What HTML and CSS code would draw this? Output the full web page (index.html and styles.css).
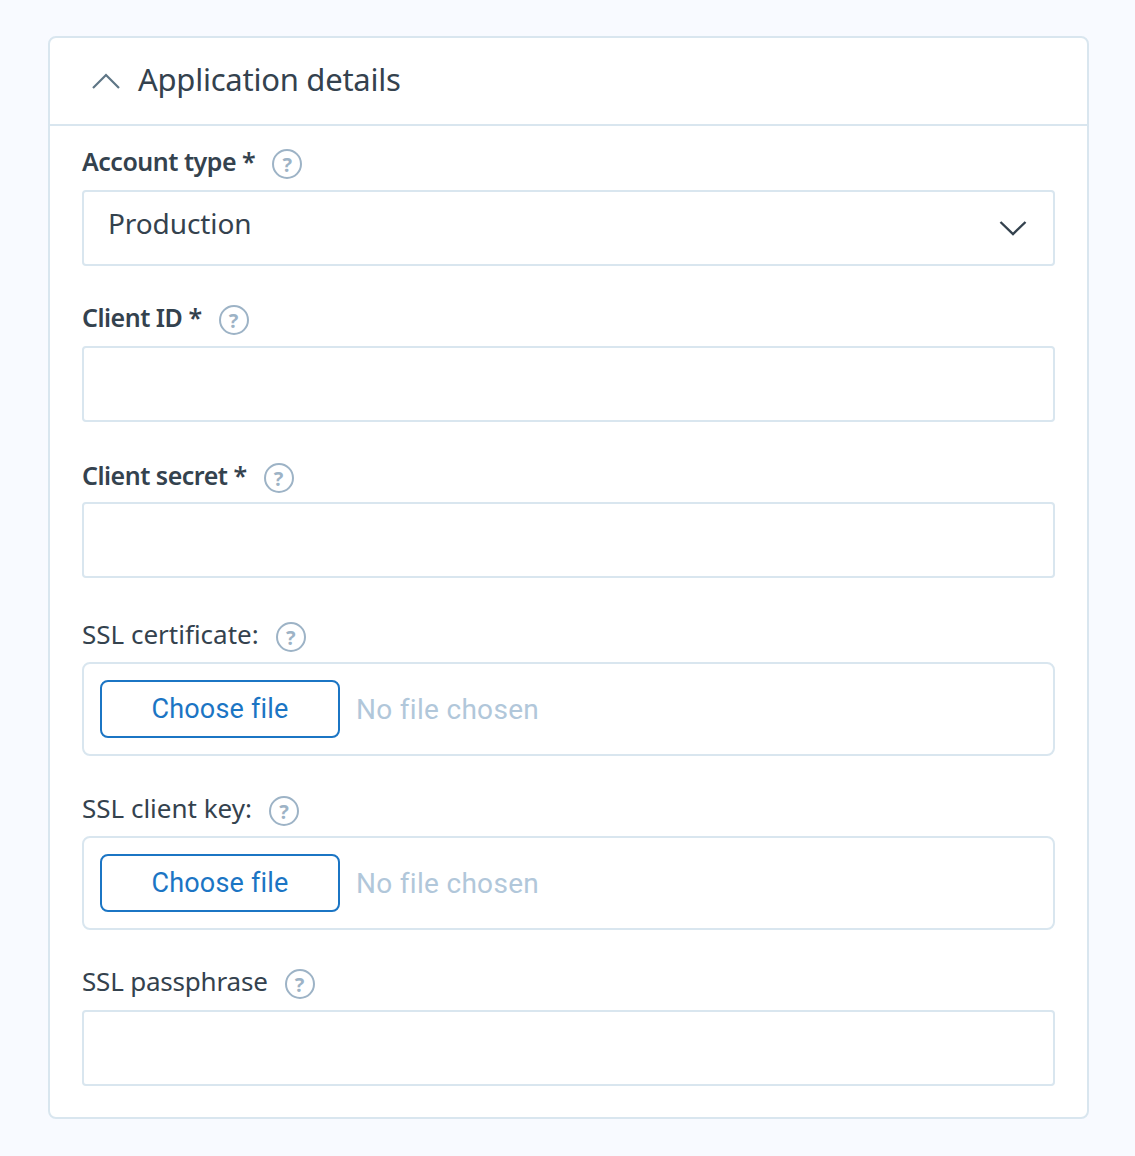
FILE: index.html
```html
<!DOCTYPE html>
<html lang="en">
<head>
    <meta charset="UTF-8">
    <meta name="viewport" content="width=device-width, initial-scale=1.0">
    <title>Application details</title>
    <link rel="stylesheet" href="styles.css">
</head>
<body>

    <section class="card">
        <header class="card-header">
            <svg class="chevron-up" width="30" height="18" viewBox="0 0 30 18" fill="none"><path d="M2 16 L15 3 L28 16" stroke="#5f7686" stroke-width="2.2"/></svg>
            <h2>Application details</h2>
        </header>

        <div class="card-body">
            <!-- Account type -->
            <div class="field">
                <div class="field-label">
                    <label class="required">Account type *</label>
                    <span class="help">?</span>
                </div>
                <div class="select">
                    <span>Production</span>
                    <svg width="28" height="16" viewBox="0 0 28 16" fill="none"><path d="M1.5 2 L14 14 L26.5 2" stroke="#34424e" stroke-width="2.4"/></svg>
                </div>
            </div>

            <div class="field">
                <div class="field-label">
                    <label class="required">Client ID *</label>
                    <span class="help">?</span>
                </div>
                <input class="text-input" type="text">
            </div>

            <div class="field field-tall">
                <div class="field-label">
                    <label class="required">Client secret *</label>
                    <span class="help">?</span>
                </div>
                <input class="text-input" type="text">
            </div>

            <!-- File uploads -->
            <div class="field field-file">
                <div class="field-label">
                    <label>SSL certificate:</label>
                    <span class="help">?</span>
                </div>
                <div class="file-box">
                    <button class="file-button">Choose file</button>
                    <span class="file-name">No file chosen</span>
                </div>
            </div>

            <div class="field field-file">
                <div class="field-label">
                    <label>SSL client key:</label>
                    <span class="help">?</span>
                </div>
                <div class="file-box">
                    <button class="file-button">Choose file</button>
                    <span class="file-name">No file chosen</span>
                </div>
            </div>

            <div class="field">
                <div class="field-label">
                    <label class="label-tight">SSL passphrase</label>
                    <span class="help">?</span>
                </div>
                <input class="text-input" type="text">
            </div>
        </div>
    </section>

</body>
</html>
```

FILE: styles.css
```css
body {
    margin: 0;
    padding: 36px 46px 37px 48px;
    background-color: #f8faff;
    font-family: "Noto Sans", Arial, sans-serif;
    color: #34424e;
}

.card {
    background-color: #fff;
    border: 2px solid #d9e6ef;
    border-radius: 8px;
}

.card-header {
    display: flex;
    align-items: center;
    gap: 17px;
    height: 86px;
    padding-left: 41px;
    border-bottom: 2px solid #d9e6ef;
}

.card-header h2 {
    margin: 0 0 4px;
    font-size: 31px;
    font-weight: 400;
    letter-spacing: -0.25px;
}

.card-body {
    padding: 22px 32px 31px;
}

.field {
    margin-bottom: 38px;
}

.field-tall {
    margin-bottom: 42px;
}

.field:last-child {
    margin-bottom: 0;
}

.field-label {
    display: flex;
    align-items: center;
    height: 32px;
    margin-bottom: 10px;
}

.field-tall .field-label {
    padding-top: 2px;
    margin-bottom: 8px;
}

.field-file .field-label {
    padding-top: 1px;
    margin-bottom: 9px;
}

.field-label label {
    margin-right: 17px;
    padding-bottom: 6px;
    font-size: 26px;
}

.field-label .label-tight {
    letter-spacing: -0.2px;
}

.field-label .required {
    font-size: 25px;
    font-weight: 600;
    letter-spacing: -0.5px;
}

.help {
    display: flex;
    align-items: center;
    justify-content: center;
    box-sizing: border-box;
    width: 30px;
    height: 30px;
    border: 2px solid #9db3c6;
    border-radius: 50%;
    color: #9db3c6;
    font-size: 20px;
    font-weight: 700;
}

.select,
.text-input {
    display: block;
    box-sizing: border-box;
    width: 100%;
    height: 76px;
    background-color: #fff;
    border: 2px solid #d9e6ef;
    border-radius: 4px;
}

.select {
    display: flex;
    align-items: center;
    justify-content: space-between;
    padding: 0 26px 0 24px;
    font-size: 28px;
    letter-spacing: -0.1px;
}

.select span {
    padding-bottom: 10px;
}

.file-box {
    display: flex;
    align-items: center;
    gap: 16px;
    box-sizing: border-box;
    height: 94px;
    padding: 0 16px;
    border: 2px solid #d9e6ef;
    border-radius: 8px;
}

.file-button {
    width: 240px;
    height: 58px;
    background-color: #fff;
    border: 2px solid #1b75c4;
    border-radius: 8px;
    color: #1b75c4;
    font-family: Roboto, Arial, sans-serif;
    font-size: 27px;
    letter-spacing: 0.2px;
}

.file-name {
    color: #b1c7da;
    font-family: Roboto, Arial, sans-serif;
    font-size: 28px;
    letter-spacing: 0.3px;
}
```
